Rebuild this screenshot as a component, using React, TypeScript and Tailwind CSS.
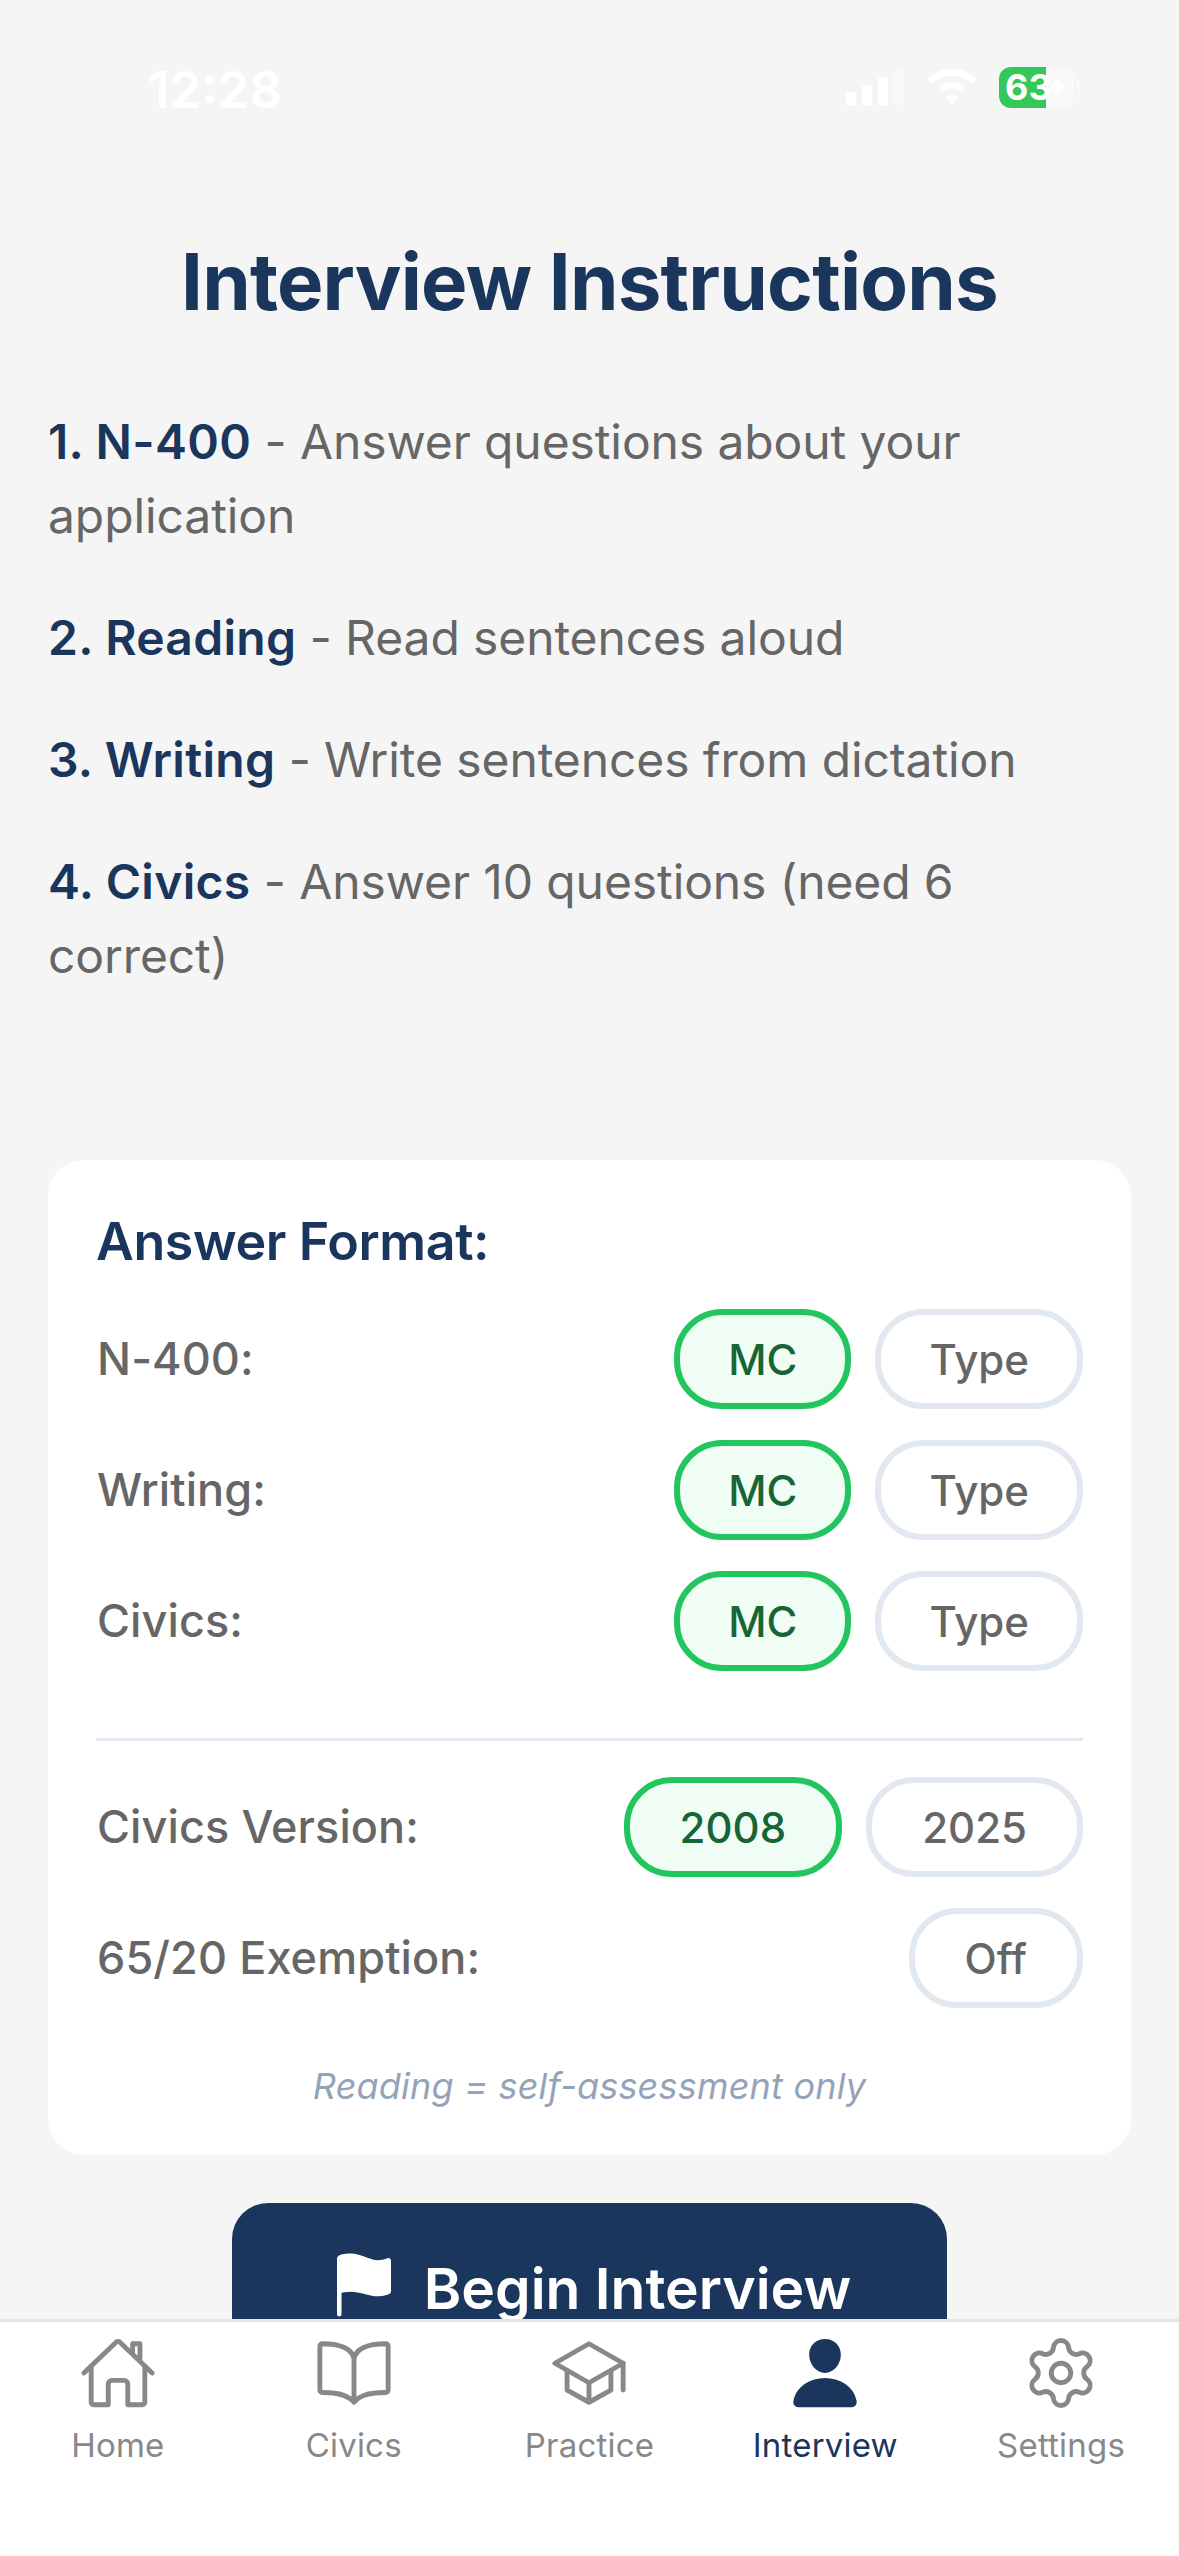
import { IoHomeOutline, IoBookOutline, IoSchoolOutline, IoPerson, IoFlag } from "react-icons/io5";
import { Settings } from "lucide-react";

const Pill = ({ label, active, narrow }: { label: string; active?: boolean; narrow?: boolean }) => (
  <div
    className={
      (active
        ? "flex h-[100px] items-center rounded-[48px] border-[6px] border-[#22c55e] bg-[#f0fdf4] text-[42px] font-medium text-[#166534] "
        : "flex h-[100px] items-center rounded-[48px] border-[6px] border-[#e2e8f0] bg-white text-[42px] font-medium text-[#666666] ") +
      (narrow ? "px-[48px]" : "px-[50px]")
    }
  >
    {label}
  </div>
);

const Row = ({ label, children }: { label: string; children: React.ReactNode }) => (
  <div className="flex items-center justify-between">
    <span className="pl-[1px] text-[45px] font-medium tracking-[0.1px] text-[#666666]">{label}</span>
    <div className="flex gap-[24px]">{children}</div>
  </div>
);

const StatusBar = () => (
  <div className="relative h-[144px] shrink-0">
    <span className="absolute left-[148px] top-[60px] text-[51px] font-semibold leading-[60px] text-white">12:28</span>
    <div className="absolute left-[846px] top-[69px] flex items-center gap-[23px]">
      <svg width="58" height="37" viewBox="0 0 58 37" fill="white">
        <rect x="0" y="23" width="10" height="14" rx="3" />
        <rect x="16" y="16" width="10" height="21" rx="3" />
        <rect x="32" y="8" width="10" height="29" rx="3" />
        <rect x="48" y="0" width="10" height="37" rx="3" opacity="0.35" />
      </svg>
      <svg width="50" height="37" viewBox="0 0 50 37" fill="white">
        <path d="M25 0C35 0 43 4 50 10L45 15C40 10 33 7 25 7C17 7 10 10 5 15L0 10C7 4 15 0 25 0Z" />
        <path d="M25 13C31 13 35 15 39 19L34 24C32 21 29 20 25 20C21 20 18 21 16 24L11 19C15 15 19 13 25 13Z" />
        <path d="M25 26C27 26 29 27 31 28L25 37L19 28C21 27 23 26 25 26Z" />
      </svg>
    </div>
    <div className="absolute left-[999px] top-[67px] flex h-[41px] w-[75px] rounded-[12px] bg-white/40">
      <div className="h-full w-[47px] rounded-l-[12px] bg-[#34c759]" />
      <span className="absolute left-[6px] top-0 text-[36px] font-bold leading-[41px] text-white">63</span>
      <svg className="absolute left-[50px] top-[7px]" width="17" height="27" viewBox="0 0 17 27" fill="white">
        <path d="M11 0L0 16H7L5 27L17 10H9Z" />
      </svg>
    </div>
    <div className="absolute left-[1076px] top-[80px] h-[14px] w-[4px] rounded-r-full bg-white/40" />
  </div>
);

const tabs = [
  { label: "Home", icon: <IoHomeOutline size={78} className="text-[#888888]" /> },
  { label: "Civics", icon: <IoBookOutline size={78} className="text-[#888888]" /> },
  { label: "Practice", icon: <IoSchoolOutline size={78} className="text-[#888888]" /> },
  { label: "Interview", icon: <IoPerson size={78} className="text-[#1a365d]" />, active: true },
  { label: "Settings", icon: <Settings size={78} strokeWidth={1.5} className="text-[#888888]" /> },
];

export default function App() {
  return (
    <div className="flex h-[2556px] w-[1179px] flex-col overflow-hidden bg-[#f5f5f5] font-['Inter',sans-serif]">
      <div className="min-h-0 flex-1 overflow-hidden">
        <StatusBar />
        <h1 className="mt-[94px] text-center text-[78px] font-bold leading-[87px] tracking-[-0.8px] text-[#1a365d]">Interview Instructions</h1>

        <div className="mt-[80px] flex flex-col gap-[48px] px-[48px] text-[48px] leading-[74px] tracking-[-0.1px] text-[#666666]">
          <p><span className="font-semibold tracking-[0.3px] text-[#1a365d]">1. N-400</span> - Answer questions about your<br />application</p>
          <p><span className="font-semibold tracking-[0.3px] text-[#1a365d]">2. Reading</span> - Read sentences aloud</p>
          <p><span className="font-semibold tracking-[0.3px] text-[#1a365d]">3. Writing</span> - Write sentences from dictation</p>
          <p><span className="font-semibold tracking-[0.3px] text-[#1a365d]">4. Civics</span> - Answer 10 questions (need 6<br />correct)</p>
        </div>

        <div className="mx-[48px] mt-[167px] rounded-[36px] bg-white p-[48px]">
          <h2 className="pt-[1px] text-[52px] font-semibold leading-[66px] tracking-[-0.4px] text-[#1a365d]">Answer Format:</h2>
          <div className="mt-[34px] flex flex-col gap-[31px]">
            <Row label="N-400:"><Pill label="MC" active narrow /><Pill label="Type" narrow /></Row>
            <Row label="Writing:"><Pill label="MC" active narrow /><Pill label="Type" narrow /></Row>
            <Row label="Civics:"><Pill label="MC" active narrow /><Pill label="Type" narrow /></Row>
          </div>
          <div className="mb-[36px] mt-[67px] h-[3px] bg-[#e2e8f0]" />
          <div className="flex flex-col gap-[31px]">
            <Row label="Civics Version:"><Pill label="2008" active /><Pill label="2025" /></Row>
            <Row label="65/20 Exemption:"><Pill label="Off" /></Row>
          </div>
          <p className="mt-[57px] text-center text-[36px] italic leading-[42px] tracking-[0.2px] text-[#94a3b8]">Reading = self-assessment only</p>
        </div>

        <div className="mx-auto mt-[48px] flex h-[180px] w-[715px] items-start justify-center gap-[24px] rounded-[36px] bg-[#1a365d] pt-[46px]">
          <IoFlag className="text-white" size={72} />
          <span className="mt-[4px] text-[57px] font-semibold leading-[72px] text-white">Begin Interview</span>
        </div>
      </div>

      <div className="flex h-[237px] shrink-0 border-t-[3px] border-[#e5e5e5] bg-white pt-[12px]">
        {tabs.map(({ label, icon, active }) => (
          <div key={label} className="flex flex-1 flex-col items-center">
            {icon}
            <span className={active ? "mt-[13px] text-[33px] leading-[40px] tracking-[0.2px] text-[#1a365d]" : "mt-[13px] text-[33px] leading-[40px] tracking-[0.2px] text-[#888888]"}>{label}</span>
          </div>
        ))}
      </div>
    </div>
  );
}
